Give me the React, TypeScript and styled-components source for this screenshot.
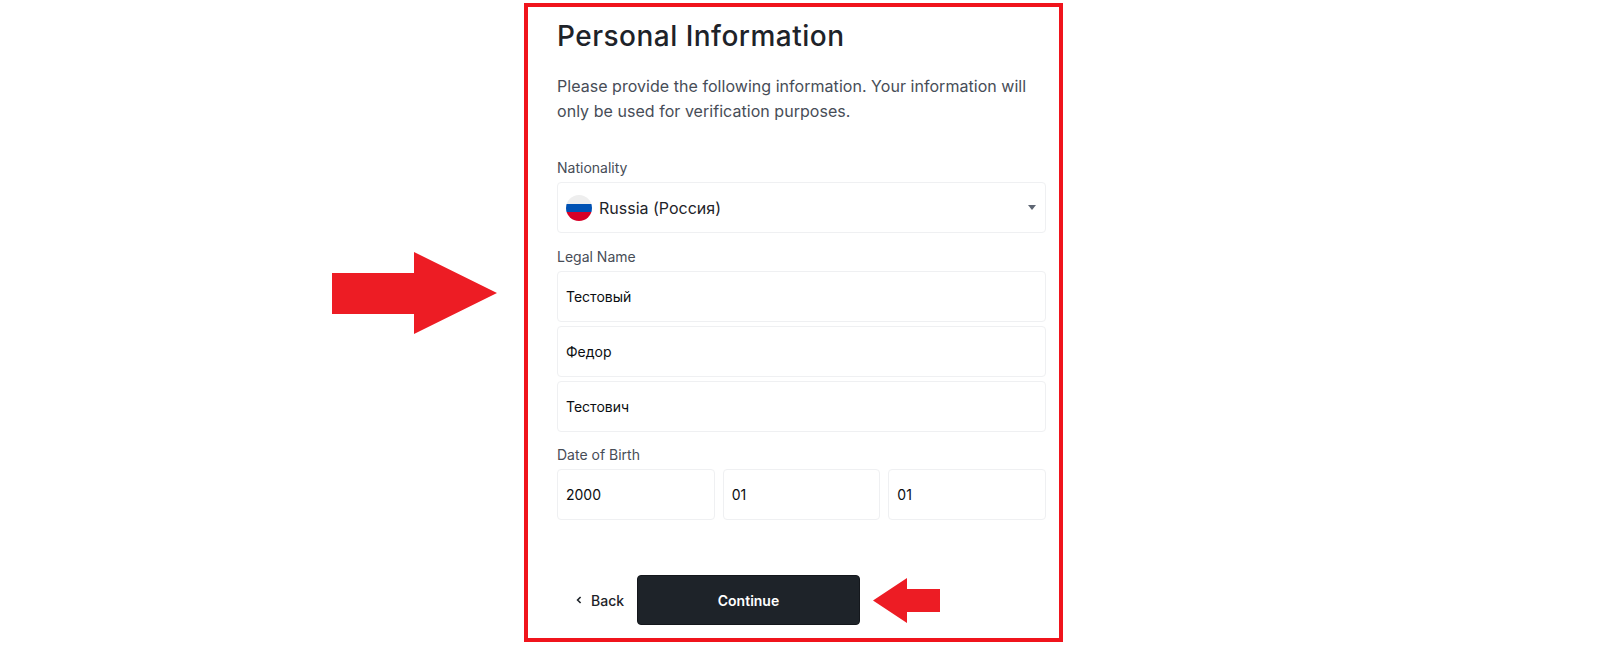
import React from 'react';
import styled, { createGlobalStyle } from 'styled-components';

const Global = createGlobalStyle`
  html, body { margin: 0; padding: 0; background: #fff; }
  body { font-family: "Inter", "Noto Sans", "Liberation Sans", sans-serif; color: #1e2329; }
`;

const Page = styled.div`
  width: 1600px;
  height: 656px;
  padding: 3px 0 0 524px;
  box-sizing: border-box;
  overflow: hidden;
`;

const Frame = styled.main`
  position: relative;
  box-sizing: border-box;
  width: 539px;
  height: 639px;
  border: 4px solid #f0141c;
  padding: 0 13px 0 29px;
  display: flex;
  flex-direction: column;
`;

const Title = styled.h1`
  margin: 11px 0 0;
  font-size: 28px;
  line-height: 36px;
  font-weight: 500;
  letter-spacing: 0.48px;
  color: #1e2329;
`;

const Intro = styled.p`
  margin: 20px 0 0;
  font-size: 16px;
  line-height: 25px;
  letter-spacing: 0.04px;
  color: #474d57;
  width: 489px;
`;

const Label = styled.label<{ $top: number }>`
  display: block;
  margin-top: ${p => p.$top}px;
  margin-bottom: 4px;
  font-size: 14px;
  line-height: 20px;
  color: #474d57;
`;

const Select = styled.div`
  box-sizing: border-box;
  height: 51px;
  border: 1px solid #eff0f2;
  border-radius: 4px;
  padding: 0 9px 0 8px;
  display: flex;
  align-items: center;
  gap: 7px;
  font-size: 16px;
  color: #1e2329;
`;

const Caret = styled.span`
  margin-left: auto;
  width: 0;
  height: 0;
  border-left: 4px solid transparent;
  border-right: 4px solid transparent;
  border-top: 5px solid #5e6673;
`;

const Stack = styled.div`
  display: flex;
  flex-direction: column;
  gap: 4px;
`;

const DateRow = styled.div`
  display: grid;
  grid-template-columns: repeat(3, 1fr);
  gap: 8px;
`;

const Field = styled.input`
  box-sizing: border-box;
  width: 100%;
  height: 51px;
  border: 1px solid #eff0f2;
  border-radius: 4px;
  padding: 0 8px;
  outline: none;
  background: #fff;
  font-family: "Inter", "Noto Sans", "Liberation Sans", sans-serif;
  font-size: 14px;
  color: #0b0e11;
`;

const Actions = styled.div`
  margin-top: 55px;
  display: flex;
  align-items: center;
`;

const BackButton = styled.button`
  width: 80px;
  height: 50px;
  padding: 0 0 0 19px;
  border: 0;
  background: transparent;
  display: flex;
  align-items: center;
  gap: 9px;
  font-family: inherit;
  font-size: 14px;
  font-weight: 500;
  color: #1e2329;
`;

const ContinueButton = styled.button`
  box-sizing: border-box;
  width: 223px;
  height: 50px;
  border: 1px solid #14171c;
  border-radius: 4px;
  background: #1e2329;
  color: #fff;
  font-family: inherit;
  font-size: 14px;
  font-weight: 600;
`;

const Arrow = styled.svg<{ $left: number; $top: number }>`
  position: absolute;
  left: ${p => p.$left}px;
  top: ${p => p.$top}px;
  display: block;
`;

const Flag = () => (
  <svg width="26" height="26" viewBox="0 0 26 26" aria-hidden="true">
    <defs><clipPath id="flag"><circle cx="13" cy="13" r="13" /></clipPath></defs>
    <g clipPath="url(#flag)">
      <rect width="26" height="9" fill="#eeeeee" />
      <rect y="9" width="26" height="8" fill="#0052b4" />
      <rect y="17" width="26" height="9" fill="#d80027" />
    </g>
  </svg>
);

const Chevron = () => (
  <svg width="6" height="8" viewBox="0 0 6 8" aria-hidden="true">
    <path d="M4.6 1 1.6 4l3 3" fill="none" stroke="#1e2329" strokeWidth="1.6" />
  </svg>
);

export default function App() {
  return (
    <Page>
      <Global />
      <Frame>
        <Title>Personal Information</Title>
        <Intro>Please provide the following information. Your information will only be used for verification purposes.</Intro>

        <Label $top={34}>Nationality</Label>
        <Select>
          <Flag />
          <span>Russia (Россия)</span>
          <Caret />
        </Select>

        <Label $top={14}>Legal Name</Label>
        <Stack>
          <Field readOnly value="Тестовый" />
          <Field readOnly value="Федор" />
          <Field readOnly value="Тестович" />
        </Stack>

        <Label $top={13}>Date of Birth</Label>
        <DateRow>
          <Field readOnly value="2000" />
          <Field readOnly value="01" />
          <Field readOnly value="01" />
        </DateRow>

        <Actions>
          <BackButton><Chevron />Back</BackButton>
          <ContinueButton>Continue</ContinueButton>
        </Actions>

        <Arrow $left={-196} $top={245} width="165" height="82" viewBox="0 0 165 82" aria-hidden="true">
          <path d="M0 21H82V0L165 41 82 82V62H0Z" fill="#ed1c24" />
        </Arrow>
        <Arrow $left={345} $top={571} width="67" height="45" viewBox="0 0 67 45" aria-hidden="true">
          <path d="M0 22.5 34 0V11H67V34H34V45Z" fill="#ed1c24" />
        </Arrow>
      </Frame>
    </Page>
  );
}
